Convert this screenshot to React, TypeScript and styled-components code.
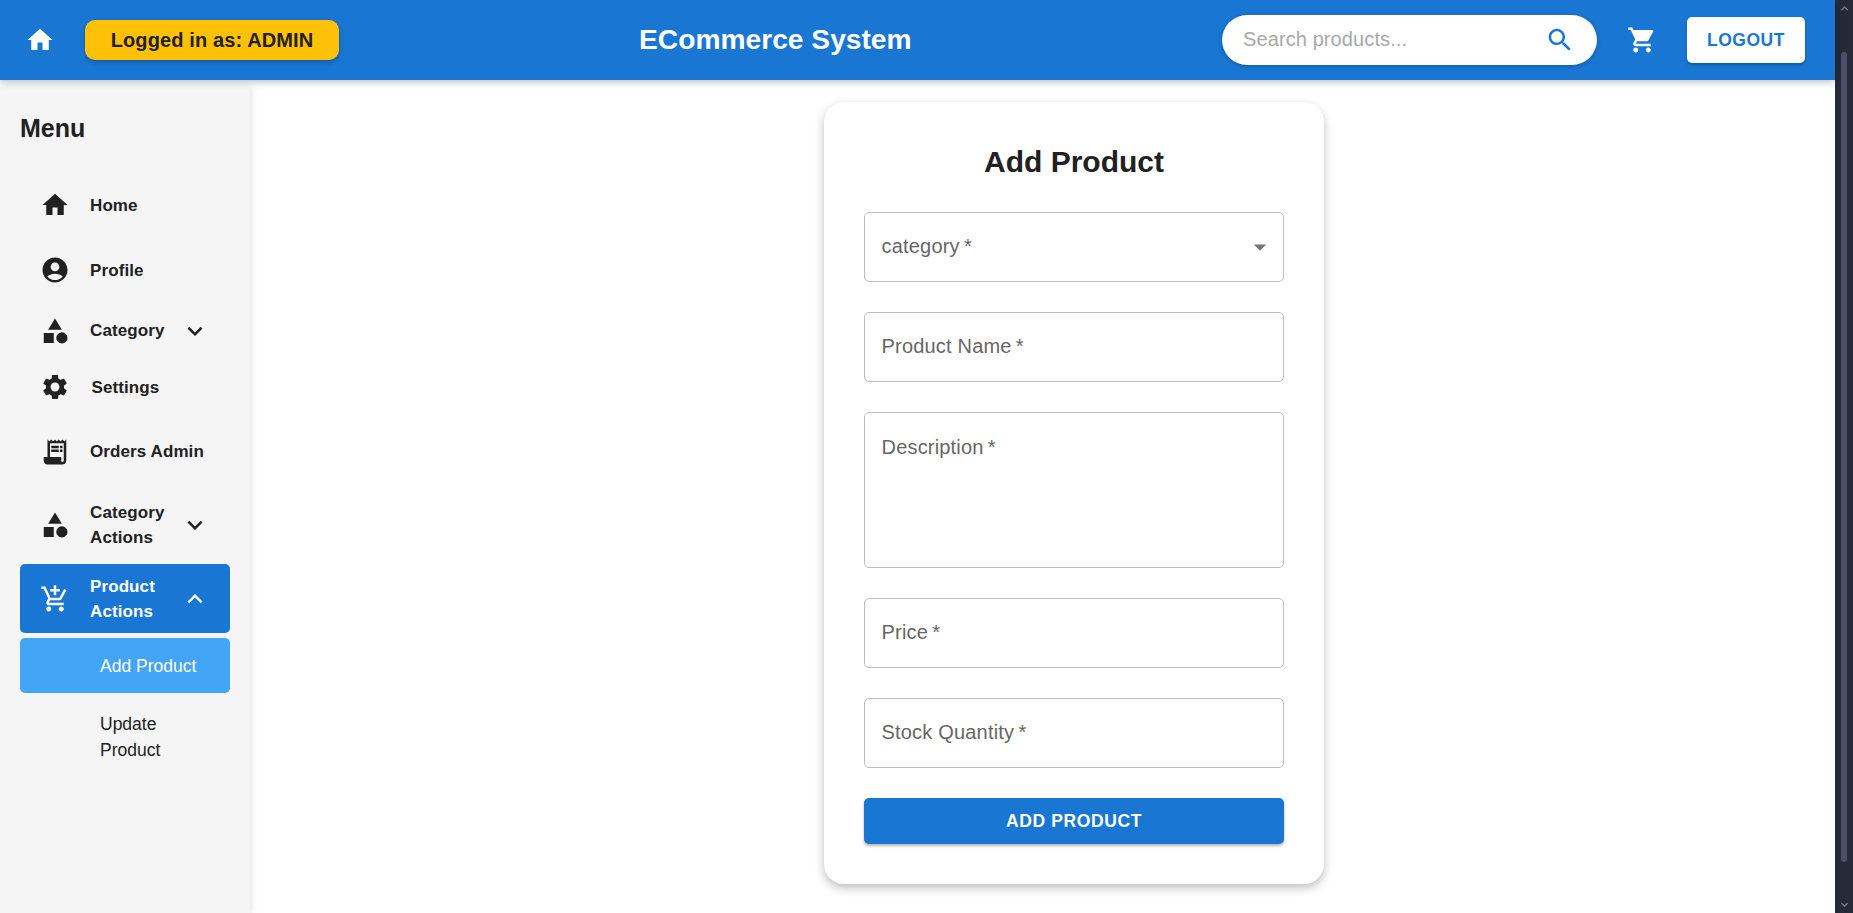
import styled, { createGlobalStyle } from "styled-components";

const PATHS = {
  home: "M10 20v-6h4v6h5v-8h3L12 3 2 12h3v8z",
  profile:
    "M12 2C6.48 2 2 6.48 2 12s4.48 10 10 10 10-4.48 10-10S17.52 2 12 2zm0 4c1.93 0 3.5 1.57 3.5 3.5S13.93 13 12 13s-3.5-1.57-3.5-3.5S10.07 6 12 6zm0 14c-2.03 0-4.43-.82-6.14-2.88C7.55 15.8 9.68 15 12 15s4.45.8 6.14 2.12C16.43 19.18 14.03 20 12 20z",
  category: "m12 2-5.5 9h11zM17.5 13a4.5 4.5 0 1 0 0 9 4.5 4.5 0 0 0 0-9zM3 13.5h8v8H3z",
  settings:
    "M19.14 12.94c.04-.3.06-.61.06-.94 0-.32-.02-.64-.07-.94l2.03-1.58c.18-.14.23-.41.12-.61l-1.92-3.32c-.12-.22-.37-.29-.59-.22l-2.39.96c-.5-.38-1.03-.7-1.62-.94l-.36-2.54c-.04-.24-.24-.41-.48-.41h-3.84c-.24 0-.43.17-.47.41l-.36 2.54c-.59.24-1.13.57-1.62.94l-2.39-.96c-.22-.08-.47 0-.59.22L2.74 8.87c-.12.21-.08.47.12.61l2.03 1.58c-.05.3-.09.63-.09.94s.02.64.07.94l-2.03 1.58c-.18.14-.23.41-.12.61l1.92 3.32c.12.22.37.29.59.22l2.39-.96c.5.38 1.03.7 1.62.94l.36 2.54c.05.24.24.41.48.41h3.84c.24 0 .44-.17.47-.41l.36-2.54c.59-.24 1.13-.56 1.62-.94l2.39.96c.22.08.47 0 .59-.22l1.92-3.32c.12-.22.07-.47-.12-.61l-2.01-1.58zM12 15.6c-1.98 0-3.6-1.62-3.6-3.6s1.62-3.6 3.6-3.6 3.6 1.62 3.6 3.6-1.62 3.6-3.6 3.6z",
  receipt:
    "M19.5 3.5 18 2l-1.5 1.5L15 2l-1.5 1.5L12 2l-1.5 1.5L9 2 7.5 3.5 6 2v14H3v3c0 1.66 1.34 3 3 3h12c1.66 0 3-1.34 3-3V2l-1.5 1.5zM19 19c0 .55-.45 1-1 1s-1-.45-1-1v-3H8V5h11v14zM9 7h6v2H9zm7 0h2v2h-2zm-7 3h6v2H9zm7 0h2v2h-2z",
  cart:
    "M7 18c-1.1 0-1.99.9-1.99 2S5.9 22 7 22s2-.9 2-2-.9-2-2-2zM1 2v2h2l3.6 7.59-1.35 2.45c-.16.28-.25.61-.25.96 0 1.1.9 2 2 2h12v-2H7.42c-.14 0-.25-.11-.25-.25l.03-.12.9-1.63h7.45c.75 0 1.41-.41 1.75-1.03l3.58-6.49c.08-.14.12-.31.12-.48 0-.55-.45-1-1-1H5.21l-.94-2H1zm16 16c-1.1 0-1.99.9-1.99 2s.89 2 1.99 2 2-.9 2-2-.9-2-2-2z",
  addCart:
    "M11 9h2V6h3V4h-3V1h-2v3H8v2h3v3zm-4 9c-1.1 0-1.99.9-1.99 2S5.9 22 7 22s2-.9 2-2-.9-2-2-2zm10 0c-1.1 0-1.99.9-1.99 2s.89 2 1.99 2 2-.9 2-2-.9-2-2-2zm-9.83-3.25.03-.12.9-1.63h7.45c.75 0 1.41-.41 1.75-1.03l3.86-7.01L19.42 4h-.01l-1.1 2-2.76 5H8.53l-.13-.27L6.16 6l-.95-2-.94-2H1v2h2l3.6 7.59-1.35 2.45c-.16.28-.25.61-.25.96 0 1.1.9 2 2 2h12v-2H7.42c-.13 0-.25-.11-.25-.25z",
  search:
    "M15.5 14h-.79l-.28-.27C15.41 12.59 16 11.11 16 9.5 16 5.91 13.09 3 9.5 3S3 5.91 3 9.5 5.91 16 9.5 16c1.61 0 3.09-.59 4.23-1.57l.27.28v.79l5 4.99L20.49 19l-4.99-5zm-6 0C7.01 14 5 11.99 5 9.5S7.01 5 9.5 5 14 7.01 14 9.5 11.99 14 9.5 14z",
  expandMore: "M16.59 8.59 12 13.17 7.41 8.59 6 10l6 6 6-6z",
  expandLess: "m12 8-6 6 1.41 1.41L12 10.83l4.59 4.58L18 14z",
  dropDown: "m7 10 5 5 5-5z",
};

type IconName = keyof typeof PATHS;

function Icon({ name }: { name: IconName }) {
  return (
    <IconSvg viewBox="0 0 24 24" aria-hidden="true">
      <path d={PATHS[name]} />
    </IconSvg>
  );
}

const NAV_ITEMS: {
  label: string;
  icon: IconName;
  height: number;
  chevron?: "expandMore" | "expandLess";
  active?: boolean;
  nudge?: boolean;
}[] = [
  { label: "Home", icon: "home", height: 60 },
  { label: "Profile", icon: "profile", height: 60 },
  { label: "Category", icon: "category", height: 51, chevron: "expandMore" },
  { label: "Settings", icon: "settings", height: 52, nudge: true },
  { label: "Orders Admin", icon: "receipt", height: 67 },
  { label: "Category Actions", icon: "category", height: 69, chevron: "expandMore" },
  { label: "Product Actions", icon: "addCart", height: 69, chevron: "expandLess", active: true },
];

function App() {
  return (
    <>
      <GlobalStyle />
      <Window>
        <Page>
          <Header>
            <HeaderIcon>
              <Icon name="home" />
            </HeaderIcon>
            <UserBadge>Logged in as: ADMIN</UserBadge>
            <BrandTitle>ECommerce System</BrandTitle>
            <SearchBox>
              <SearchInput placeholder="Search products..." />
              <SearchIcon>
                <Icon name="search" />
              </SearchIcon>
            </SearchBox>
            <HeaderIcon>
              <Icon name="cart" />
            </HeaderIcon>
            <LogoutButton>Logout</LogoutButton>
          </Header>
          <Body>
            <Sidebar>
              <MenuTitle>Menu</MenuTitle>
              <NavList>
                {NAV_ITEMS.map((item) => (
                  <NavItem key={item.label} $height={item.height} $active={item.active}>
                    <NavIcon>
                      <Icon name={item.icon} />
                    </NavIcon>
                    <NavLabel $nudge={item.nudge}>{item.label}</NavLabel>
                    {item.chevron && (
                      <Chevron>
                        <Icon name={item.chevron} />
                      </Chevron>
                    )}
                  </NavItem>
                ))}
                <SubItem $active>Add Product</SubItem>
                <SubItem>Update Product</SubItem>
              </NavList>
            </Sidebar>
            <Main>
              <FormCard>
                <FormTitle>Add Product</FormTitle>
                <SelectBox>
                  <SelectLabel>category&thinsp;*</SelectLabel>
                  <SelectArrow>
                    <Icon name="dropDown" />
                  </SelectArrow>
                </SelectBox>
                <TextInput placeholder={"Product Name\u2009*"} />
                <TextArea placeholder={"Description\u2009*"} />
                <TextInput placeholder={"Price\u2009*"} />
                <TextInput placeholder={"Stock Quantity\u2009*"} />
                <SubmitButton>Add Product</SubmitButton>
              </FormCard>
            </Main>
          </Body>
        </Page>
        <ScrollTrack>
          <ScrollArrow viewBox="0 0 12 8">
            <path d="M6 1 11 6 9.5 7.5 6 4 2.5 7.5 1 6z" />
          </ScrollArrow>
          <ScrollThumb />
          <ScrollArrow viewBox="0 0 12 8">
            <path d="M6 7 1 2 2.5.5 6 4 9.5.5 11 2z" />
          </ScrollArrow>
        </ScrollTrack>
      </Window>
    </>
  );
}

export default App;

const GlobalStyle = createGlobalStyle`
  html, body {
    margin: 0;
    height: 100%;
    overflow: hidden;
    background: #fff;
  }
  * {
    box-sizing: border-box;
  }
  body, input, textarea, button {
    font-family: "Liberation Sans", Arial, sans-serif;
  }
`;

const Window = styled.div`
  display: flex;
  width: 100vw;
  height: 100vh;
`;

const Page = styled.div`
  flex: 1;
  min-width: 0;
  display: flex;
  flex-direction: column;
`;

const IconSvg = styled.svg`
  display: block;
  width: 30px;
  height: 30px;
  fill: currentColor;
`;

const Header = styled.header`
  height: 80px;
  flex: none;
  display: flex;
  align-items: center;
  padding: 0 30px 0 25px;
  background: #1976d2;
  box-shadow: 0 3px 6px rgba(0, 0, 0, 0.22);
  position: relative;
  z-index: 2;
`;

const HeaderIcon = styled.div`
  flex: none;
  color: #fff;
  width: 30px;
  height: 30px;
`;

const UserBadge = styled.div`
  width: 254px;
  height: 40px;
  margin-left: 30px;
  flex: none;
  display: flex;
  align-items: center;
  justify-content: center;
  border-radius: 10px;
  background: #ffc107;
  color: #212121;
  font-size: 20px;
  font-weight: 700;
  letter-spacing: 0.12px;
  box-shadow: 0 2px 4px rgba(0, 0, 0, 0.25);
`;

const BrandTitle = styled.h1`
  margin: 0 auto 2px 300px;
  color: #fff;
  font-size: 28.2px;
  font-weight: 700;
  line-height: 1;
`;

const SearchBox = styled.div`
  width: 375px;
  height: 50px;
  margin-right: 30px;
  flex: none;
  display: flex;
  align-items: center;
  padding: 0 22px 0 21px;
  border-radius: 25px;
  background: #fff;
  box-shadow: 0 1px 4px rgba(0, 0, 0, 0.25);
`;

const SearchInput = styled.input`
  flex: 1;
  min-width: 0;
  border: 0;
  outline: 0;
  padding: 0 0 2px;
  background: transparent;
  font-size: 20px;
  letter-spacing: 0.1px;
  color: #212121;

  &::placeholder {
    color: #a8a8a8;
    opacity: 1;
  }
`;

const SearchIcon = styled.div`
  color: #1976d2;
  width: 30px;
  height: 30px;
`;

const LogoutButton = styled.button`
  width: 118px;
  height: 46px;
  margin-left: 30px;
  flex: none;
  border: 0;
  border-radius: 5px;
  background: #fff;
  color: #1976d2;
  font-size: 17.5px;
  font-weight: 700;
  letter-spacing: 0.5px;
  text-transform: uppercase;
  box-shadow: 0 2px 3px rgba(0, 0, 0, 0.25);
`;

const Body = styled.div`
  flex: 1;
  min-height: 0;
  display: flex;
`;

const Sidebar = styled.aside`
  width: 250px;
  flex: none;
  margin-top: 7px;
  padding: 0 20px;
  background: #f5f5f5;
  box-shadow: 2px 0 6px rgba(0, 0, 0, 0.1);
`;

const MenuTitle = styled.h2`
  margin: 0;
  height: 88px;
  padding-top: 27px;
  color: #212121;
  font-size: 25px;
  font-weight: 700;
  line-height: 28px;
`;

const NavList = styled.nav`
  display: flex;
  flex-direction: column;
  gap: 5px;
`;

const NavItem = styled.div<{ $height: number; $active?: boolean }>`
  height: ${(p) => p.$height}px;
  display: flex;
  align-items: center;
  padding-left: 20px;
  border-radius: 5px;
  background: ${(p) => (p.$active ? "#1976d2" : "transparent")};
  color: ${(p) => (p.$active ? "#fff" : "#212121")};
`;

const NavIcon = styled.div`
  width: 50px;
  flex: none;
`;

const NavLabel = styled.div<{ $nudge?: boolean }>`
  flex: 1;
  min-width: 0;
  margin-left: ${(p) => (p.$nudge ? "1.5px" : "0")};
  font-size: 17px;
  font-weight: 700;
  letter-spacing: 0.1px;
  line-height: 25px;
`;

const Chevron = styled.div`
  margin-right: 20px;
  flex: none;
`;

const SubItem = styled.div<{ $active?: boolean }>`
  min-height: 55px;
  display: flex;
  align-items: center;
  padding: ${(p) => (p.$active ? "0" : "12.5px")} 20px ${(p) => (p.$active ? "0" : "12.5px")} 80px;
  border-radius: 5px;
  background: ${(p) => (p.$active ? "#42a5f5" : "transparent")};
  color: ${(p) => (p.$active ? "#fff" : "#212121")};
  font-size: 17.5px;
  line-height: 26px;
`;

const Main = styled.main`
  flex: 1;
  min-width: 0;
  padding: 22px 0 0 574px;
`;

const FormCard = styled.section`
  width: 500px;
  height: 782px;
  display: flex;
  flex-direction: column;
  gap: 30px;
  padding: 40px;
  border-radius: 20px;
  background: #fff;
  box-shadow: 0 4px 10px rgba(0, 0, 0, 0.25);
`;

const FormTitle = styled.h2`
  margin: 0;
  height: 40px;
  color: #212121;
  font-size: 30px;
  font-weight: 700;
  line-height: 40px;
  text-align: center;
`;

const fieldBase = `
  width: 100%;
  flex: none;
  border: 1px solid #bdbdbd;
  border-radius: 5px;
  background: #fff;
  font-size: 20px;
  letter-spacing: 0.19px;
  color: #666;
  outline: 0;
`;

const SelectBox = styled.div`
  ${fieldBase}
  height: 70px;
  display: flex;
  align-items: center;
  justify-content: space-between;
  padding: 0 8px 0 16.5px;
`;

const SelectLabel = styled.span`
  margin-top: -2px;
`;

const SelectArrow = styled.div`
  color: #757575;
`;

const TextInput = styled.input`
  ${fieldBase}
  height: 70px;
  padding: 0 16.5px 2px;

  &::placeholder {
    color: #666;
    opacity: 1;
  }
`;

const TextArea = styled.textarea`
  ${fieldBase}
  height: 156px;
  padding: 23px 16.5px 0;
  resize: none;
  line-height: 23px;

  &::placeholder {
    color: #666;
    opacity: 1;
  }
`;

const SubmitButton = styled.button`
  width: 100%;
  height: 46px;
  flex: none;
  border: 0;
  border-radius: 5px;
  background: #1976d2;
  color: #fff;
  font-size: 17.5px;
  font-weight: 700;
  letter-spacing: 0.6px;
  text-transform: uppercase;
  box-shadow: 0 2px 3px rgba(0, 0, 0, 0.3);
`;

const ScrollTrack = styled.div`
  width: 18px;
  flex: none;
  display: flex;
  flex-direction: column;
  align-items: center;
  justify-content: space-between;
  padding: 5px 0;
  background: #252a38;
`;

const ScrollArrow = styled.svg`
  width: 9px;
  height: 6px;
  fill: #6c6f7b;
`;

const ScrollThumb = styled.div`
  width: 6px;
  height: 810px;
  border-radius: 3px;
  background: #4c4f69;
`;
